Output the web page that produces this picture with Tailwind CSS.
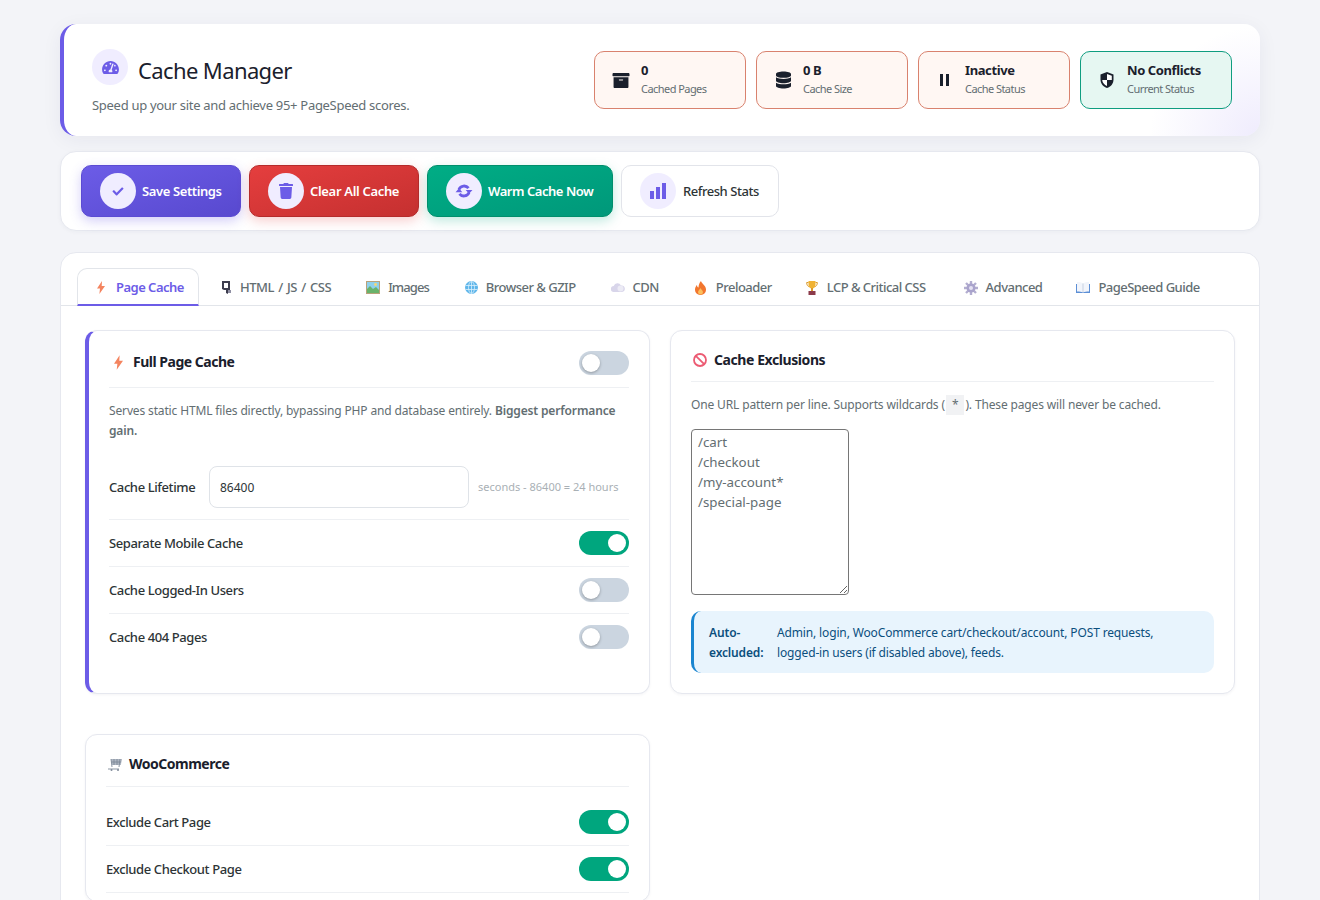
<!DOCTYPE html>
<html lang="en">
<head>
    <meta charset="UTF-8">
    <title>Cache Manager</title>
    <script src="https://cdn.jsdelivr.net/npm/@tailwindcss/browser@4"></script>
</head>
<body class="h-[900px] overflow-hidden bg-[#f3f4f8] font-['Noto_Sans',sans-serif] tracking-[-0.025em] text-[#1a202c]">
<div class="mx-[60px] pt-6">

    <!-- header -->
    <header class="flex h-28 items-center justify-between rounded-2xl border-l-4 border-[#6c5ce7] bg-[radial-gradient(circle_at_100%_100%,#efecfd_0,#ffffff_110px)] pl-7 pr-7 shadow-[0_4px_20px_rgba(30,40,80,0.06)]">
        <div>
            <div class="flex h-[46px] items-start gap-[10px]">
                <span class="mt-[3px] flex h-9 w-9 items-center justify-center rounded-full bg-[#f0edff]">
                    <svg class="h-[15px] w-[17px] fill-[#6c5ce7]" viewBox="0 0 576 512"><path d="M288 32C128.94 32 0 160.94 0 320c0 52.8 14.25 102.26 39.06 144.8 5.61 9.62 16.3 15.2 27.44 15.2h443c11.14 0 21.83-5.58 27.44-15.2C561.75 422.26 576 372.8 576 320c0-159.06-128.94-288-288-288zm0 64c14.71 0 26.58 10.13 30.32 23.65-1.11 2.26-2.64 4.23-3.45 6.67l-9.22 27.67c-5.13 3.49-10.97 6.01-17.64 6.01-17.67 0-32-14.33-32-32S270.33 96 288 96zM96 384c-17.67 0-32-14.33-32-32s14.33-32 32-32 32 14.33 32 32-14.33 32-32 32zm48-160c-17.67 0-32-14.33-32-32s14.33-32 32-32 32 14.33 32 32-14.33 32-32 32zm246.77-72.41l-61.33 184C343.13 347.33 352 364.54 352 384c0 11.72-3.38 22.55-8.88 32H232.88c-5.5-9.45-8.88-20.28-8.88-32 0-33.94 26.5-61.43 59.9-63.59l61.34-184.01c4.17-12.56 17.73-19.45 30.36-15.17 12.57 4.19 19.35 17.79 15.17 30.36zm14.66 57.2l15.52-46.55c3.47-1.29 7.13-2.23 11.05-2.23 17.67 0 32 14.33 32 32s-14.33 32-32 32c-11.38-.01-20.89-6.28-26.57-15.22zM480 384c-17.67 0-32-14.33-32-32s14.33-32 32-32 32 14.33 32 32-14.33 32-32 32z"/></svg>
                </span>
                <h1 class="mt-[4px] text-[22px] leading-[40px] font-normal tracking-[-0.028em]">Cache Manager</h1>
            </div>
            <p class="mt-1 text-[13px] leading-[18px] tracking-[-0.0225em] text-[#636e72]">Speed up your site and achieve 95+ PageSpeed scores.</p>
        </div>
        <div class="flex gap-[10px]">
            <div class="flex h-[58px] w-[152px] items-center gap-[11px] rounded-[10px] border border-[#d9826e] bg-[#fff7f3] pl-[17px]">
                <svg class="h-[17px] w-[18px] fill-[#1a202c]" viewBox="0 0 512 512"><path d="M32 448c0 17.7 14.3 32 32 32h384c17.7 0 32-14.3 32-32V160H32v288zm160-212c0-6.6 5.4-12 12-12h104c6.6 0 12 5.4 12 12v8c0 6.6-5.4 12-12 12H204c-6.6 0-12-5.4-12-12v-8zM480 32H32C14.3 32 0 46.3 0 64v48c0 8.8 7.2 16 16 16h480c8.8 0 16-7.2 16-16V64c0-17.7-14.3-32-32-32z"/></svg>
                <div class="pb-[2px]"><div class="text-[13px] leading-[18px] font-bold">0</div><div class="mt-[1px] text-[11px] leading-[18px] tracking-[-0.05em] text-[#636e72]">Cached Pages</div></div>
            </div>
            <div class="flex h-[58px] w-[152px] items-center gap-[12px] rounded-[10px] border border-[#d9826e] bg-[#fff7f3] pl-[19px]">
                <svg class="h-[18px] w-[15px] fill-[#1a202c]" viewBox="0 0 448 512"><path d="M448 73.143v45.714C448 159.143 347.667 192 224 192S0 159.143 0 118.857V73.143C0 32.857 100.333 0 224 0s224 32.857 224 73.143zM448 176v102.857C448 319.143 347.667 352 224 352S0 319.143 0 278.857V176c48.125 33.143 136.208 48.572 224 48.572S399.874 209.143 448 176zm0 160v102.857C448 479.143 347.667 512 224 512S0 479.143 0 438.857V336c48.125 33.143 136.208 48.572 224 48.572S399.874 369.143 448 336z"/></svg>
                <div class="pb-[2px]"><div class="text-[13px] leading-[18px] font-bold">0 B</div><div class="mt-[1px] text-[11px] leading-[18px] tracking-[-0.05em] text-[#636e72]">Cache Size</div></div>
            </div>
            <div class="flex h-[58px] w-[152px] items-center gap-[16px] rounded-[10px] border border-[#d9826e] bg-[#fff7f3] pl-[21px]">
                <svg class="h-[12px] w-[9px] fill-[#1a202c]" viewBox="0 0 9 12"><rect width="3" height="12"/><rect x="6" width="3" height="12"/></svg>
                <div class="pb-[2px]"><div class="text-[13px] leading-[18px] font-bold">Inactive</div><div class="mt-[1px] text-[11px] leading-[18px] tracking-[-0.05em] text-[#636e72]">Cache Status</div></div>
            </div>
            <div class="flex h-[58px] w-[152px] items-center gap-[13px] rounded-[10px] border border-[#0f9d80] bg-[#e6f7f2] pl-[19px]">
                <svg class="h-[16px] w-[14px]" viewBox="0 0 14 16"><path fill="#1a202c" d="M7 0 .5 2.400v5C.5 11.600 3.400 14.700 7 16c3.600-1.300 6.500-4.400 6.500-8.600v-5z"/><path fill="#fff" d="M7 2 11.800 3.700V8H7zM7 8H2.200C2.400 10.700 4.400 12.800 7 14z"/></svg>
                <div class="pb-[2px]"><div class="text-[13px] leading-[18px] font-bold">No Conflicts</div><div class="mt-[1px] text-[11px] leading-[18px] tracking-[-0.05em] text-[#636e72]">Current Status</div></div>
            </div>
        </div>
    </header>

    <!-- actions -->
    <div class="mt-[15px] flex h-[80px] items-center gap-2 rounded-2xl border border-[#e6e8ef] bg-white pl-5 text-[13px] tracking-[-0.035em] shadow-[0_1px_4px_rgba(30,40,80,0.04)]">
        <button class="flex h-[52px] w-[160px] items-center gap-[6px] rounded-[10px] border border-[#5b4bd3] bg-linear-to-br from-[#6c5ce7] to-[#5849cf] pl-[18px] font-semibold tracking-[-0.03em] text-white shadow-[0_4px_12px_rgba(108,92,231,0.3)]">
            <span class="flex h-9 w-9 items-center justify-center rounded-full bg-[#f0edff]">
                <svg class="h-[11px] w-[12px] fill-[#6c5ce7]" viewBox="0 0 512 512"><path d="M173.898 439.404l-166.4-166.4c-9.997-9.997-9.997-26.206 0-36.204l36.203-36.204c9.997-9.998 26.207-9.998 36.204 0L192 312.69 432.095 72.596c9.997-9.997 26.207-9.997 36.204 0l36.203 36.204c9.997 9.997 9.997 26.206 0 36.204l-294.4 294.401c-9.998 9.997-26.207 9.997-36.204-.001z"/></svg>
            </span>
            <span class="pt-[2px]">Save Settings</span>
        </button>
        <button class="flex h-[52px] w-[170px] items-center gap-[6px] rounded-[10px] border border-[#b52b2b] bg-linear-to-br from-[#e53e3e] to-[#c53030] pl-[18px] font-semibold tracking-[-0.025em] text-white shadow-[0_4px_12px_rgba(229,62,62,0.25)]">
            <span class="flex h-9 w-9 items-center justify-center rounded-full bg-[#f0edff]">
                <svg class="h-[16px] w-[14px] fill-[#6c5ce7]" viewBox="0 0 448 512"><path d="M432 32H312l-9.4-18.7A24 24 0 0 0 281.1 0H166.8a23.72 23.72 0 0 0-21.4 13.3L136 32H16A16 16 0 0 0 0 48v32a16 16 0 0 0 16 16h416a16 16 0 0 0 16-16V48a16 16 0 0 0-16-16zM53.2 467a48 48 0 0 0 47.9 45h245.8a48 48 0 0 0 47.9-45L416 128H32z"/></svg>
            </span>
            <span class="pt-[2px]">Clear All Cache</span>
        </button>
        <button class="flex h-[52px] w-[186px] items-center gap-[6px] rounded-[10px] border border-[#008f6c] bg-linear-to-br from-[#00ad85] to-[#00987a] pl-[18px] font-semibold text-white shadow-[0_4px_12px_rgba(0,166,126,0.25)]">
            <span class="flex h-9 w-9 items-center justify-center rounded-full bg-[#f0edff]">
                <svg class="h-[18px] w-[18px]" viewBox="0 0 16 16"><g fill="none" stroke="#6c5ce7" stroke-width="2.500"><path d="M3.500 6.500A5 5 0 0 1 12 5.500"/><path d="M12.500 9.500A5 5 0 0 1 4 10.500"/></g><g fill="#6c5ce7"><path d="M9.500 7h6l-3 3.500z"/><path d="M.5 9h6l-3-3.500z"/></g></svg>
            </span>
            <span class="pt-[2px]">Warm Cache Now</span>
        </button>
        <button class="flex h-[52px] w-[158px] items-center gap-[7px] rounded-[10px] border border-[#e2e4ea] bg-white pl-[18px] font-medium text-[#2d3436]">
            <span class="flex h-9 w-9 items-center justify-center rounded-full bg-[#f0edff]">
                <svg class="h-[16px] w-[16px] fill-[#6c5ce7]" viewBox="0 0 16 16"><rect y="8" width="4" height="8"/><rect x="6" y="4" width="4" height="12"/><rect x="12" width="4" height="16"/></svg>
            </span>
            <span class="pt-[2px]">Refresh Stats</span>
        </button>
    </div>

    <!-- settings panel -->
    <div class="mt-[21px] rounded-t-2xl border border-[#e6e8ef] bg-white pt-[15px]">
        <nav class="flex h-[38px] items-stretch border-b border-[#e2e5ea] pl-4 text-[13px] font-medium tracking-[-0.04em] text-[#636e72]">
            <a class="-mb-[1px] flex w-[122px] items-center gap-[11px] rounded-t-[10px] border border-b-2 border-[#e2e5ea] border-b-[#6c5ce7] pt-[2px] pl-[19px] font-semibold text-[#6c5ce7]">
                <svg class="h-[13px] w-[8px]" viewBox="0 0 8 13"><path fill="#f4845f" d="M5 0 0 7.500h3L2.400 13 8 5H4.700z"/></svg>
                Page Cache
            </a>
            <a class="flex items-center gap-[8px] pt-[2px] pl-[23px] [word-spacing:1.5px]">
                <svg class="h-[13px] w-[10px]" viewBox="0 0 10 13"><path fill="#3d3d4e" d="M0 0h8v9H6v4l-2-1V9H2L0 8z"/><path fill="#fff" d="M2 2h4v5H2z"/><path fill="#8f8fa3" d="M6 9h3v3H6z"/></svg>
                HTML / JS / CSS
            </a>
            <a class="flex items-center gap-[8px] pt-[2px] pl-[35px] tracking-[-0.07em]">
                <svg class="h-[13px] w-[14px]" viewBox="0 0 14 13"><rect width="14" height="13" fill="#b9a27a"/><rect x="1" y="1" width="12" height="11" fill="#8fd0ec"/><path fill="#69b36b" d="M1 12V8l3-3 3 3 3-2 3 3v3z"/><circle cx="9.500" cy="3.500" r="1.400" fill="#f7d774"/></svg>
                Images
            </a>
            <a class="flex items-center gap-[8px] pt-[2px] pl-[36px]">
                <svg class="h-[13px] w-[13px]" viewBox="0 0 13 13"><circle cx="6.500" cy="6.500" r="6.500" fill="#5fb6ea"/><g fill="none" stroke="#d9f0fc" stroke-width=".8"><ellipse cx="6.500" cy="6.500" rx="3" ry="6"/><path d="M.5 4.500h12M.5 8.500h12M6.500.5v12"/></g></svg>
                Browser &amp; GZIP
            </a>
            <a class="flex items-center gap-[8px] pt-[2px] pl-[35px]">
                <svg class="h-[9px] w-[14px]" viewBox="0 0 14 9"><path fill="#d8d5ea" d="M3 9a3 3 0 0 1-.3-6A4 4 0 0 1 10 2.500 3.200 3.200 0 0 1 11 9z"/><circle cx="9.500" cy="5.500" r="3" fill="#ecebf5"/></svg>
                CDN
            </a>
            <a class="flex items-center gap-[10px] pt-[2px] pl-[36px]">
                <svg class="h-[14px] w-[11px]" viewBox="0 0 11 14"><path fill="#f2762e" d="M6 0c.5 2.500 5 4.500 5 8.500A5.300 5.300 0 0 1 5.500 14 5.300 5.300 0 0 1 0 8.500C0 6.500 1 5 2 4c0 1.500.7 2.300 1.500 2.500C3.500 4 4.500 1.500 6 0z"/><path fill="#fbbf5c" d="M5.500 7c.3 1.500 2.500 2.300 2.500 4.200A2.500 2.500 0 0 1 5.500 13.500 2.500 2.500 0 0 1 3 11.200C3 9.500 5 8.500 5.500 7z"/></svg>
                Preloader
            </a>
            <a class="flex items-center gap-[9px] pt-[2px] pl-[34px]">
                <svg class="h-[14px] w-[12px]" viewBox="0 0 12 14"><path fill="none" stroke="#d99a2b" d="M2.500 1.500H.7c0 2.500 1 4 2.800 4.300M9.500 1.500h1.800c0 2.500-1 4-2.800 4.300"/><path fill="#f0b233" d="M2.500 0h7v3.500A3.500 3.500 0 0 1 6 7.500a3.500 3.500 0 0 1-3.500-4z"/><rect x="5" y="7" width="2" height="3" fill="#d99a2b"/><rect x="2.500" y="10" width="7" height="4" fill="#8c3b4a"/></svg>
                LCP &amp; Critical CSS
            </a>
            <a class="flex items-center gap-[8px] pt-[2px] pl-[38px]">
                <svg class="h-[14px] w-[14px]" viewBox="0 0 14 14"><g stroke="#b3aed0" stroke-width="2.400"><path d="M7 0v14M0 7h14M2 2l10 10M12 2 2 12"/></g><circle cx="7" cy="7" r="4.500" fill="#a9a3cc"/><circle cx="7" cy="7" r="2" fill="#e4e1f2"/></svg>
                Advanced
            </a>
            <a class="flex items-center gap-[8px] pt-[2px] pl-[34px]">
                <svg class="h-[11px] w-[14px]" viewBox="0 0 14 11"><path fill="#5c8fd6" d="M0 2h14v9H0z"/><path fill="#f2f5fb" d="M1 0c2.500 0 4.500.3 6 1.500C8.500.3 10.500 0 13 0v9.500c-2.500 0-4.500.2-6 1-1.500-.8-3.500-1-6-1z"/><path fill="#aab9d0" d="M6.700 1.500h.6v9h-.6z"/></svg>
                PageSpeed Guide
            </a>
        </nav>

        <div class="grid grid-cols-2 items-start gap-x-5 gap-y-10 px-6 pt-6">
            <!-- full page cache -->
            <section class="h-[364px] rounded-xl border border-l-4 border-[#e6e8ef] border-l-[#6c5ce7] bg-white pt-[20px] pr-5 pl-5 shadow-[0_1px_3px_rgba(30,40,80,0.05)]">
                <div class="flex items-center justify-between border-b border-[#eef0f3] pb-[12px]">
                    <h2 class="flex items-center gap-[10px] pb-[2px] pl-[5px] text-sm leading-[22px] font-bold tracking-[-0.035em]">
                        <svg class="h-[15px] w-[9px]" viewBox="0 0 8 13"><path fill="#f4845f" d="M5 0 0 7.500h3L2.400 13 8 5H4.700z"/></svg>
                        Full Page Cache
                    </h2>
                    <span class="flex h-6 w-[50px] items-center rounded-full bg-[#cbd5e0] pl-[3px]"><span class="h-[18px] w-[18px] rounded-full bg-white shadow-[0_1px_3px_rgba(0,0,0,0.3)]"></span></span>
                </div>
                <p class="mt-[13px] text-xs leading-[20px] tracking-[-0.012em] text-[#636e72]">Serves static HTML files directly, bypassing PHP and database entirely. <strong class="font-semibold">Biggest performance</strong> <strong class="font-semibold">gain.</strong></p>
                <div class="mt-[25px] flex items-center border-b border-[#eef0f3] pb-[11px]">
                    <label class="w-[100px] pt-[2px] text-[13px] font-medium text-[#2d3436]">Cache Lifetime</label>
                    <input value="86400" class="h-[42px] w-[260px] rounded-lg border border-[#dfe3e8] px-[10px] text-xs tracking-normal text-[#2d3436]">
                    <span class="ml-[9px] text-[11px] tracking-normal text-[#a9b0b5]">seconds - 86400 = 24 hours</span>
                </div>
                <div class="flex h-[47px] items-center justify-between border-b border-[#eef0f3] text-[13px] font-medium text-[#2d3436]">
                    <span class="pt-[2px]">Separate Mobile Cache</span>
                    <span class="flex h-6 w-[50px] items-center justify-end rounded-full bg-[#00a67e] pr-[3px]"><span class="h-[18px] w-[18px] rounded-full bg-white"></span></span>
                </div>
                <div class="flex h-[47px] items-center justify-between border-b border-[#eef0f3] text-[13px] font-medium text-[#2d3436]">
                    <span class="pt-[2px]">Cache Logged-In Users</span>
                    <span class="flex h-6 w-[50px] items-center rounded-full bg-[#cbd5e0] pl-[3px]"><span class="h-[18px] w-[18px] rounded-full bg-white shadow-[0_1px_3px_rgba(0,0,0,0.3)]"></span></span>
                </div>
                <div class="flex h-[46px] items-center justify-between text-[13px] font-medium text-[#2d3436]">
                    <span class="pt-[2px]">Cache 404 Pages</span>
                    <span class="flex h-6 w-[50px] items-center rounded-full bg-[#cbd5e0] pl-[3px]"><span class="h-[18px] w-[18px] rounded-full bg-white shadow-[0_1px_3px_rgba(0,0,0,0.3)]"></span></span>
                </div>
            </section>

            <!-- exclusions -->
            <section class="h-[364px] rounded-xl border border-[#e6e8ef] bg-white px-5 pt-[19px] shadow-[0_1px_3px_rgba(30,40,80,0.05)]">
                <h2 class="flex items-center gap-[7px] border-b border-[#eef0f3] pb-[12px] pl-[2px] text-sm leading-[19px] font-bold tracking-[-0.03em]">
                    <svg class="h-[14px] w-[14px]" viewBox="0 0 14 14"><circle cx="7" cy="7" r="6" fill="none" stroke="#ec5b73" stroke-width="1.800"/><path stroke="#ec5b73" stroke-width="1.800" d="M2.800 2.800l8.400 8.400"/></svg>
                    Cache Exclusions
                </h2>
                <p class="mt-[13px] text-xs leading-[20px] tracking-[-0.012em] text-[#636e72]">One URL pattern per line. Supports wildcards (<code class="mx-[1px] inline-block bg-[#f1f2f4] px-[6px] font-['Noto_Sans',sans-serif] leading-[20px]">*</code>). These pages will never be cached.</p>
                <textarea rows="8" class="mt-[14px] block h-[166px] w-[158px] rounded-[4px] border border-[#767676] px-[6px] py-[2px] text-[13.33px] leading-[20px] tracking-normal text-[#636e72]">/cart
/checkout
/my-account*
/special-page</textarea>
                <div class="mt-[16px] flex h-[62px] items-center gap-[13px] rounded-[10px] border-l-[3px] border-[#1a85d0] bg-[#e8f4fd] pt-[2px] pl-[15px] text-xs leading-[20px] tracking-[-0.012em] text-[#0b4f7d]">
                    <strong class="w-[55px] shrink-0 font-semibold">Auto-excluded:</strong>
                    <span class="w-[400px]">Admin, login, WooCommerce cart/checkout/account, POST requests, logged-in users (if disabled above), feeds.</span>
                </div>
            </section>

            <!-- woocommerce -->
            <section class="rounded-xl border border-[#e6e8ef] bg-white px-5 pt-[19px] pb-2 shadow-[0_1px_3px_rgba(30,40,80,0.05)]">
                <h2 class="flex items-center gap-[7px] border-b border-[#eef0f3] pb-[13px] pl-[2px] text-sm leading-[19px] font-bold tracking-[-0.035em]">
                    <svg class="h-[14px] w-[14px]" viewBox="0 0 14 14"><path fill="#aeb6c2" d="M3 2h11l-1.200 6H4z"/><path fill="none" stroke="#7f8a99" stroke-width=".9" d="M0 12h11M3 2l1 8M6 2v6M9 2v6M12 2l-1 8M3.300 5h9.700"/><circle cx="3.500" cy="13" r="1" fill="#7f8a99"/><circle cx="10" cy="13" r="1" fill="#7f8a99"/></svg>
                    WooCommerce
                </h2>
                <div class="mt-[12px] flex h-[47px] items-center justify-between border-b border-[#eef0f3] text-[13px] font-medium text-[#2d3436]">
                    <span class="pt-[2px]">Exclude Cart Page</span>
                    <span class="flex h-6 w-[50px] items-center justify-end rounded-full bg-[#00a67e] pr-[3px]"><span class="h-[18px] w-[18px] rounded-full bg-white"></span></span>
                </div>
                <div class="flex h-[47px] items-center justify-between border-b border-[#eef0f3] text-[13px] font-medium text-[#2d3436]">
                    <span class="pt-[2px]">Exclude Checkout Page</span>
                    <span class="flex h-6 w-[50px] items-center justify-end rounded-full bg-[#00a67e] pr-[3px]"><span class="h-[18px] w-[18px] rounded-full bg-white"></span></span>
                </div>
            </section>
        </div>
    </div>
</div>
</body>
</html>
